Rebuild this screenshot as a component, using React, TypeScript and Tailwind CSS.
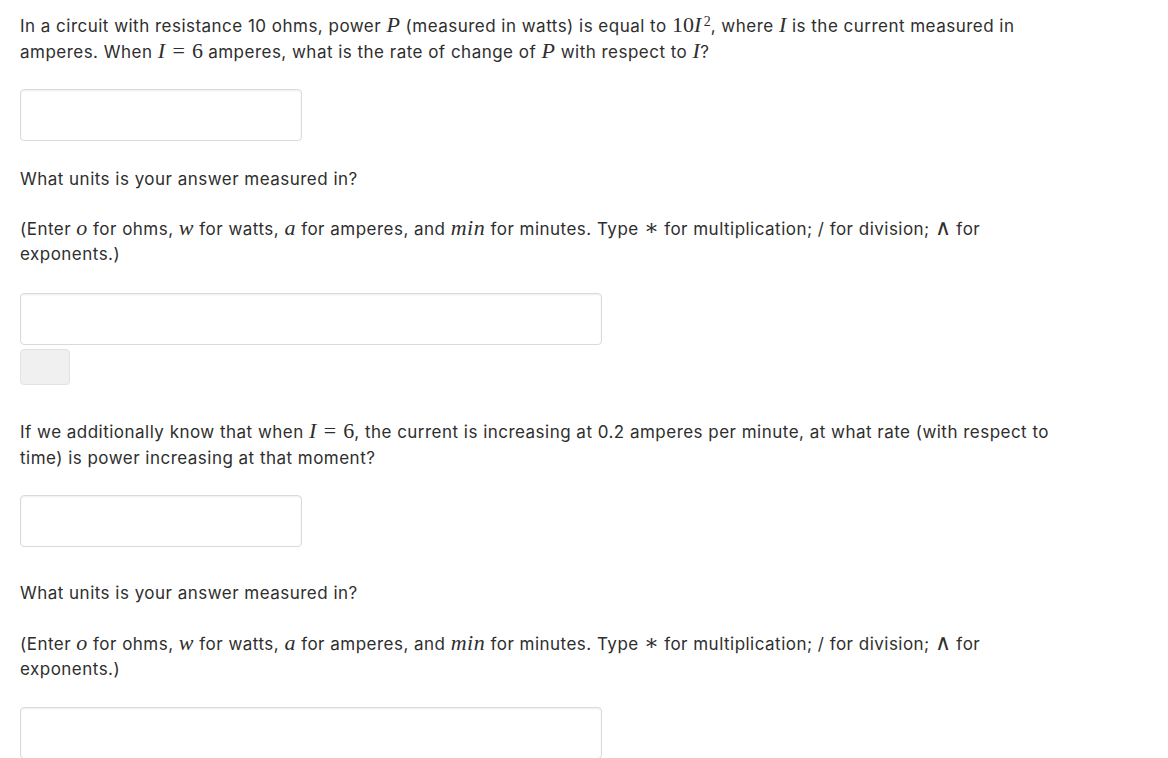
const M = ({ children }: { children: React.ReactNode }) => (
  <span className="font-['Liberation_Serif','DejaVu_Serif',serif] italic text-[22px] leading-none tracking-[0.5px]">{children}</span>
);

const N = ({ children }: { children: React.ReactNode }) => (
  <span className="font-['Liberation_Serif','DejaVu_Serif',serif] text-[22px] leading-none tracking-normal">{children}</span>
);

const Eq = () => <span className="mx-[7px]"><N>=</N></span>;

const Input = ({ wide, className = '' }: { wide?: boolean; className?: string }) => (
  <div
    className={`${wide ? 'w-[582px]' : 'w-[282px]'} h-[52px] rounded-[4px] border border-[#dadada] bg-white shadow-[inset_0_1px_2px_rgba(0,0,0,0.07)] ${className}`}
  />
);

function UnitsHint() {
  return (
    <p>
      (Enter <M>o</M> for ohms, <M>w</M> for watts, <M>a</M> for amperes, and <M>min</M> for minutes. Type{' '}
      <N>∗</N> for multiplication; / for division; <N>∧</N> for
      <br />
      exponents.)
    </p>
  );
}

export default function App() {
  return (
    <div className="min-h-screen bg-white px-5 pt-[14px] font-['Inter','Noto_Sans',sans-serif] text-[17px] leading-[25.6px] tracking-[0.48px] text-[#2e2e2e]">
      <p>
        In a circuit with resistance 10 ohms, power <M>P</M> (measured in watts) is equal to{' '}
        <N>10</N>
        <M>I</M>
        <sup className="font-['Liberation_Serif',serif] text-[14px] tracking-normal relative -top-[6px] ml-[2px]">2</sup>,
        where <M>I</M> is the current measured in
        <br />
        amperes. When <M>I</M>
        <Eq />
        <N>6</N> amperes, what is the rate of change of <M>P</M> with respect to <M>I</M>?
      </p>

      <Input className="mt-[24px]" />

      <p className="mt-[26px]">What units is your answer measured in?</p>

      <div className="mt-[24px]">
        <UnitsHint />
      </div>

      <Input wide className="mt-[25px]" />
      <div className="mt-[4px] h-[36px] w-[50px] rounded-[4px] border border-[#e2e2e2] bg-[#f0f0f0]" />

      <p className="mt-[35px]">
        If we additionally know that when <M>I</M>
        <Eq />
        <N>6</N>, the current is increasing at 0.2 amperes per minute, at what rate (with respect to
        <br />
        time) is power increasing at that moment?
      </p>

      <Input className="mt-[24px]" />

      <p className="mt-[34px]">What units is your answer measured in?</p>

      <div className="mt-[25px]">
        <UnitsHint />
      </div>

      <Input wide className="mt-[24px]" />
    </div>
  );
}
